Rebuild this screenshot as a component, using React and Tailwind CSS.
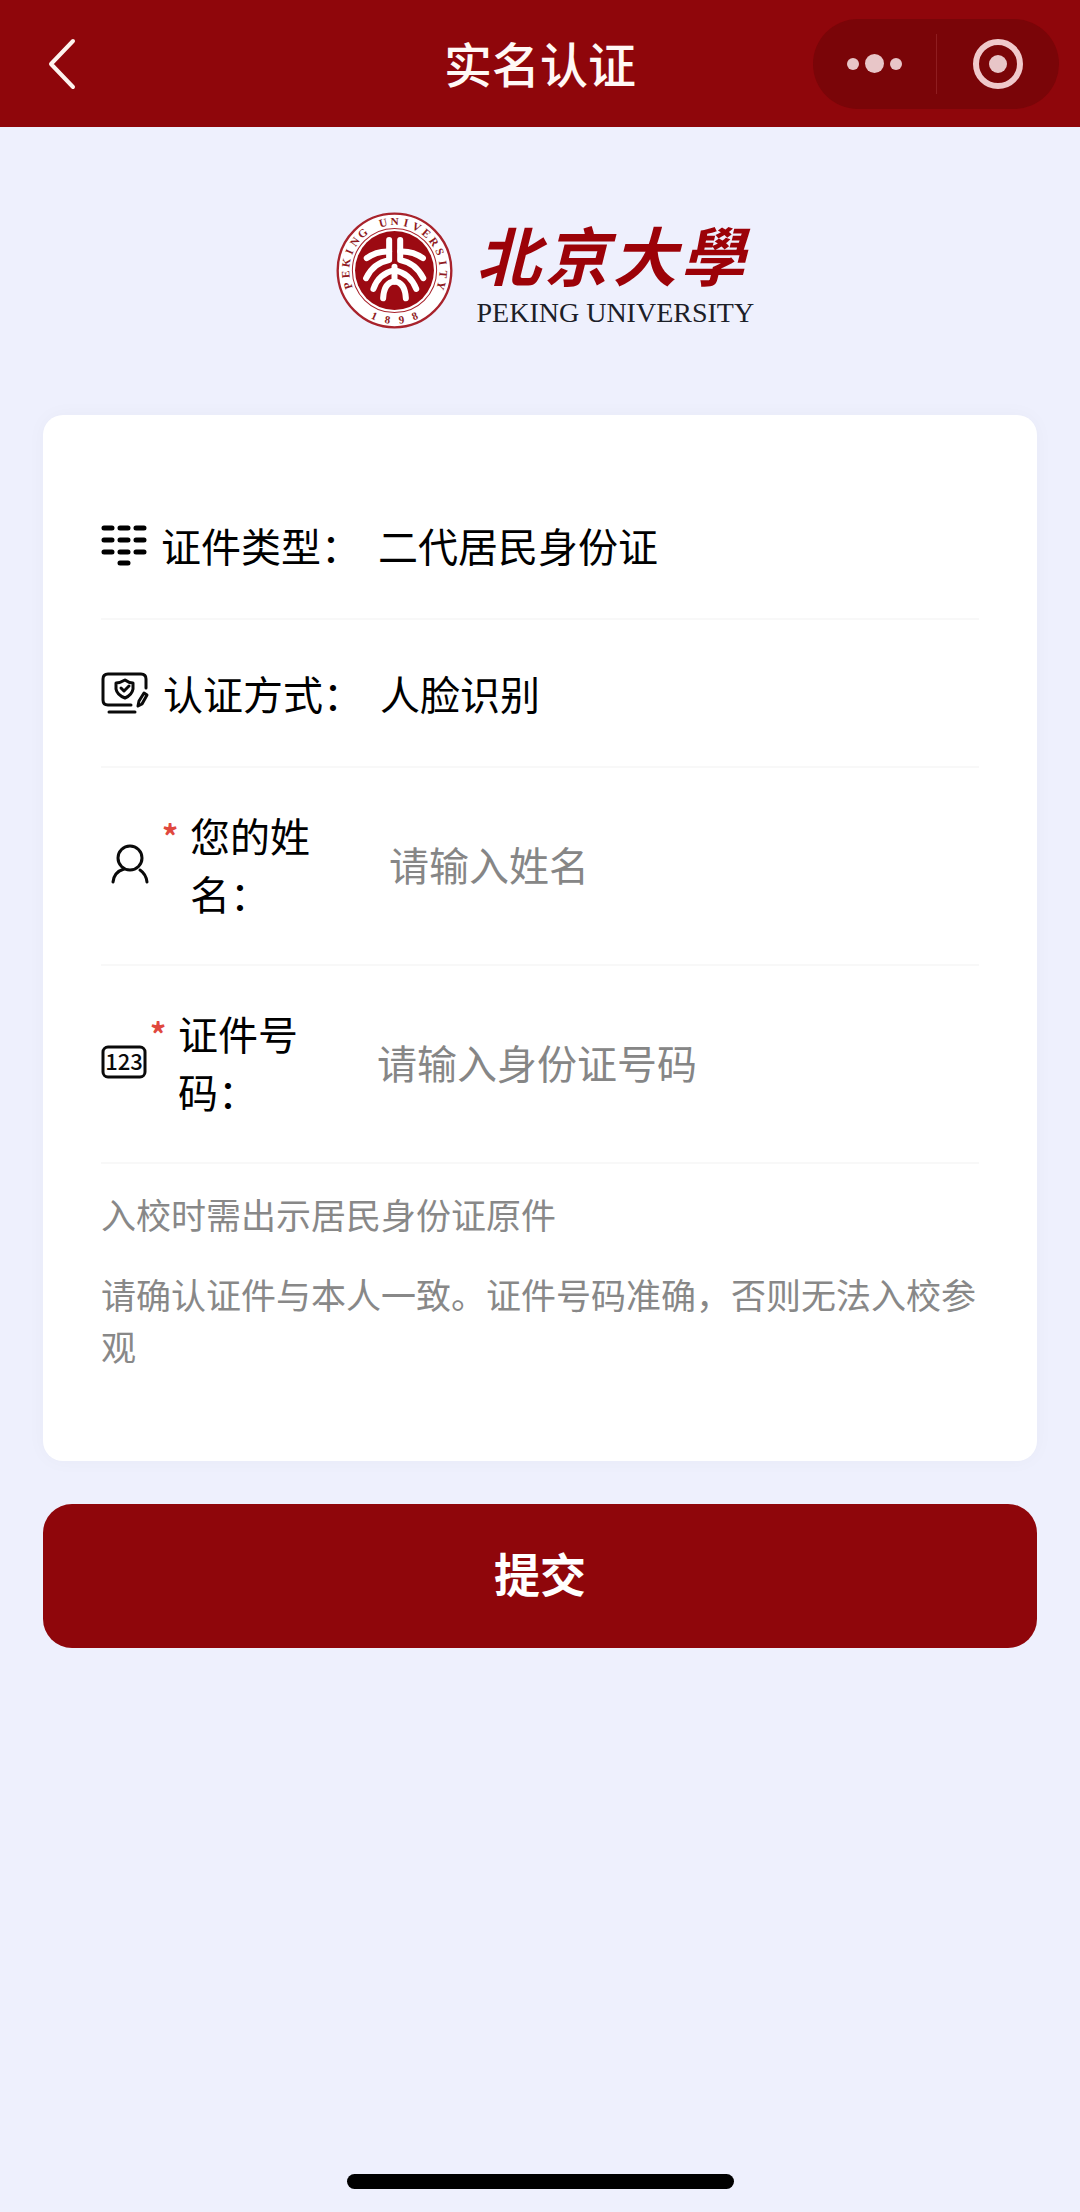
import { useState } from 'react';

// Anillo de texto del sello: cada letra se coloca girada sobre el círculo
const SEAL_TOP = 'PEKING UNIVERSITY'.split('');
const SEAL_BOTTOM = '1898'.split('');

function Seal() {
  return (
    <svg viewBox="20 20 350 350" className="w-[117px] h-[117px] shrink-0" aria-label="Peking University 1898">
      <circle cx="195" cy="195" r="170" fill="#fff" stroke="#a8232c" strokeWidth="7" />
      <circle cx="195" cy="195" r="126" fill="none" stroke="#a8232c" strokeWidth="3" />
      <circle cx="195" cy="195" r="118" fill="#9c0a12" />
      <g fill="#8f1a22" fontFamily="'Liberation Serif', serif" fontWeight="700" textAnchor="middle">
        {SEAL_TOP.map((letra, i) => (
          <text key={i} x="195" y="60" fontSize="34" transform={`rotate(${-108 + i * 13.5} 195 195)`}>
            {letra}
          </text>
        ))}
        {SEAL_BOTTOM.map((num, i) => (
          <text key={i} x="195" y="355" fontSize="33" transform={`rotate(${24 - i * 16} 195 195)`}>
            {num}
          </text>
        ))}
      </g>
      <g fill="none" stroke="#fff" strokeWidth="18" strokeLinecap="round" strokeLinejoin="round">
        <path d="M179 104V164Q132 172 110 218" />
        <path d="M212 104V164Q258 172 281 218" />
        <path d="M179 138Q142 136 112 158" />
        <path d="M212 138Q250 136 280 158" />
        <path d="M195 184V228" />
        <path d="M195 194Q148 204 132 250" />
        <path d="M195 194Q242 204 260 250" />
        <path d="M161 278Q164 230 195 228Q226 230 229 278" />
      </g>
    </svg>
  );
}

function Logo() {
  return (
    <div className="flex items-center justify-center gap-6 pt-[85px] pb-[86px] pl-[4px]">
      <Seal />
      <div className="w-[272px]">
        <div className="flex justify-between pr-1 text-[64px] leading-[80px] font-bold italic text-[#9c0208]">
          <span>北</span>
          <span>京</span>
          <span>大</span>
          <span>學</span>
        </div>
        <div className="pt-1 font-['Liberation_Serif',serif] text-[28px] leading-8 text-[#1c2028] whitespace-nowrap">
          PEKING UNIVERSITY
        </div>
      </div>
    </div>
  );
}

function KeypadIcon() {
  return (
    <svg viewBox="0 0 46 42" className="w-[46px] h-[42px]" stroke="#000" strokeWidth="5" strokeLinecap="round">
      <path d="M3 4h8M19 4h8M35 4h8M3 16h8M19 16h8M35 16h8M3 28h8M19 28h8M35 28h8M19 39h8" />
    </svg>
  );
}

function ScreenShieldIcon() {
  return (
    <svg viewBox="0 0 48 42" className="w-12 h-[42px]" fill="none" stroke="#0a0a0a" strokeWidth="3" strokeLinecap="round" strokeLinejoin="round">
      <path d="M30 33H7Q2 33 2 28V7Q2 2 7 2H40Q45 2 45 7V16" />
      <path d="M8 40H34" />
      <path d="M24 8Q28 11 32 11V17Q31 23 24 26Q16 23 15 17V11Q19 11 24 8Z" />
      <path d="M20 16L23 19L28 14" />
      <path d="M43 21L46 23L41 32L37 34L38 29Z" />
    </svg>
  );
}

function UserIcon() {
  return (
    <svg viewBox="0 0 58 42" className="w-[58px] h-[42px]" fill="none" stroke="#0a0a0a" strokeWidth="3" strokeLinecap="round">
      <circle cx="29" cy="15" r="12" />
      <path d="M23 26Q13 29 12 39M39 27Q45 31 46 39" />
    </svg>
  );
}

function NumberIcon() {
  return (
    <svg viewBox="0 0 46 34" className="w-[46px] h-[34px]">
      <rect x="2" y="2" width="42" height="30" rx="5" fill="none" stroke="#0a0a0a" strokeWidth="3" />
      <text x="23" y="25" textAnchor="middle" fontSize="22" fontWeight="500" fontFamily="'Noto Sans CJK SC', sans-serif" fill="#0a0a0a">
        123
      </text>
    </svg>
  );
}

function InfoRow({ icon, label, value }) {
  return (
    <div className="flex items-center min-h-[148px] border-b-2 border-[#f8f8f8]">
      {icon}
      <span className="w-[217px] ml-[14px]">{label}</span>
      <span>{value}</span>
    </div>
  );
}

function InputRow({ id, icon, label, placeholder, value, onChange }) {
  return (
    <div className="flex items-center pt-[38px] pb-[42px] border-b-2 border-[#f8f8f8]">
      {icon}
      <label htmlFor={id} className="flex w-[230px] pr-16 shrink-0">
        <span className="w-[31px] pl-[3px] shrink-0 text-[32px] font-bold text-[#e0483e]">*</span>
        <span>{label}</span>
      </label>
      <input
        id={id}
        type="text"
        value={value}
        onChange={(e) => onChange(e.target.value)}
        placeholder={placeholder}
        className="flex-1 min-w-0 bg-transparent outline-none placeholder-[#868686]"
      />
    </div>
  );
}

export default function App() {
  const [nombre, setNombre] = useState('');
  const [documento, setDocumento] = useState('');

  return (
    <div className="flex flex-col min-h-screen bg-[#eef0fd] font-['Noto_Sans_CJK_SC',sans-serif] text-black">
      <header className="grid grid-cols-3 items-center h-[127px] px-[21px] bg-[#8f060b]">
        <button type="button" aria-label="返回" className="w-8 h-14 ml-[26px]">
          <svg viewBox="0 0 32 56" fill="none" stroke="#fdf3ee" strokeWidth="4" strokeLinecap="round" strokeLinejoin="round">
            <path d="M26 5L4 28L26 51" />
          </svg>
        </button>
        <h1 className="pb-[3px] text-center text-5xl font-medium text-[#fff8f5] whitespace-nowrap">实名认证</h1>
        <div className="flex items-center justify-self-end w-[246px] h-[90px] rounded-full bg-[#7a0508]">
          <button type="button" aria-label="更多" className="flex flex-1 items-center justify-center gap-[6px]">
            <span className="size-3 rounded-full bg-[#e8c6c8]" />
            <span className="size-[19px] rounded-full bg-[#e8c6c8]" />
            <span className="size-3 rounded-full bg-[#e8c6c8]" />
          </button>
          <span className="w-px h-15 bg-[#8f1d20]" />
          <button type="button" aria-label="关闭" className="flex flex-1 items-center justify-center">
            <span className="flex items-center justify-center size-[50px] rounded-full border-6 border-[#f0c9cb]">
              <span className="size-[18px] rounded-full bg-[#e8c6c8]" />
            </span>
          </button>
        </div>
      </header>

      <Logo />

      <form className="px-[43px]" onSubmit={(e) => e.preventDefault()}>
        <div className="px-[58px] py-[57px] rounded-[20px] bg-white shadow-[0_0_20px_rgba(0,0,0,0.03)] text-[40px] leading-[58px]">
          <InfoRow icon={<KeypadIcon />} label="证件类型：" value="二代居民身份证" />
          <InfoRow icon={<ScreenShieldIcon />} label="认证方式：" value="人脸识别" />
          <InputRow
            id="nombre"
            icon={<UserIcon />}
            label="您的姓名："
            placeholder="请输入姓名"
            value={nombre}
            onChange={setNombre}
          />
          <InputRow
            id="documento"
            icon={<NumberIcon />}
            label="证件号码："
            placeholder="请输入身份证号码"
            value={documento}
            onChange={setDocumento}
          />
          <div className="flex flex-col gap-7 pt-6 pb-8 text-[35px] leading-[52px] text-[#888888]">
            <p>入校时需出示居民身份证原件</p>
            <p>请确认证件与本人一致。证件号码准确，否则无法入校参观</p>
          </div>
        </div>

        <button type="submit" className="w-full h-36 mt-[43px] pb-2 rounded-[29px] bg-[#8f060b] text-[46px] font-bold text-white">
          提交
        </button>
      </form>

      <div className="w-[387px] h-[15px] mt-auto mx-auto mb-[23px] rounded-full bg-black" />
    </div>
  );
}
